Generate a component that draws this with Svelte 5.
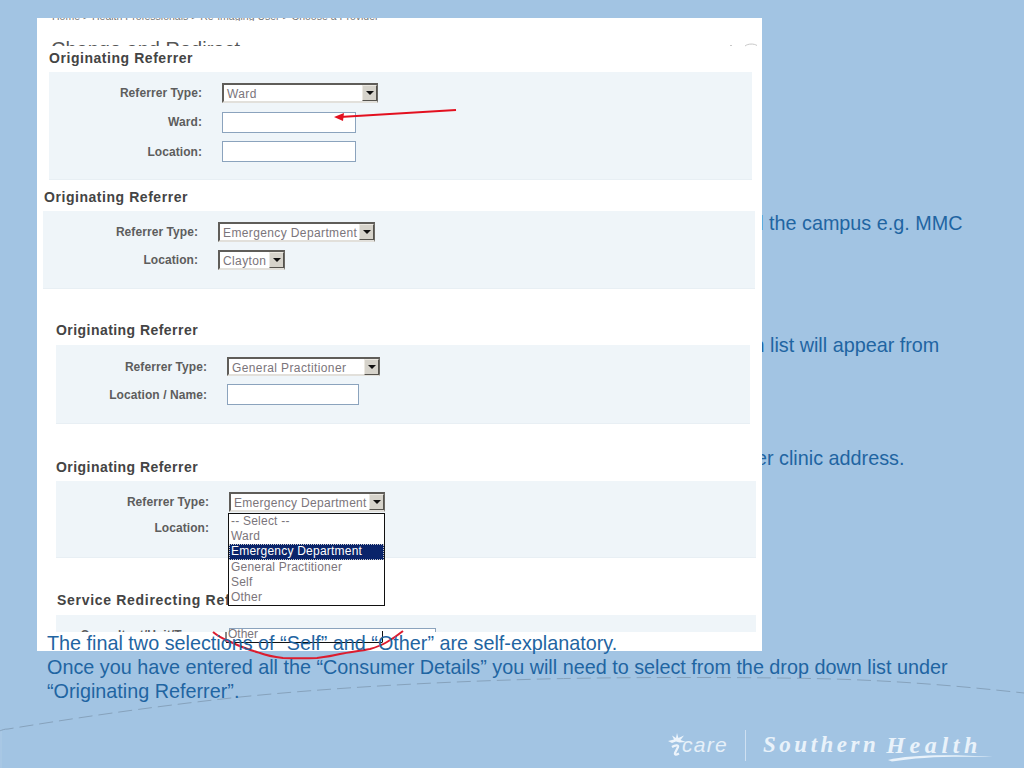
<script>
  const options = ['-- Select --', 'Ward', 'Emergency Department', 'General Practitioner', 'Self', 'Other'];
</script>

<div class="slide">
  <p class="frag f1">d the campus e.g. MMC</p>
  <p class="frag f2">n list will appear from</p>
  <p class="frag f3">her clinic address.</p>

  <svg class="swoosh" width="1024" height="768" viewBox="0 0 1024 768" aria-hidden="true">
    <path d="M0 731 C 2 730 4 729 8 729 C 70 719 140 708 240 697 C 330 688 430 682 543 679 C 620 677 760 677 833 679 C 900 681 960 686 1024 693" />
    <path class="edge" d="M1 731 V 768" />
  </svg>

  <div class="panel">
    <div class="crumbs">Home &gt; Health Professionals &gt; Re-Imaging User &gt; Choose a Provider</div>
    <div class="heading">Change and Redirect</div>

    <section class="s1">
      <h3>Originating Referrer</h3>
      <div class="box">
        <span class="lab">Referrer Type:</span>
        <div class="sel w156"><span>Ward</span><i></i></div>
        <span class="lab">Ward:</span>
        <div class="inp"></div>
        <span class="lab">Location:</span>
        <div class="inp"></div>
      </div>
    </section>

    <section class="s2">
      <h3>Originating Referrer</h3>
      <div class="box">
        <span class="lab">Referrer Type:</span>
        <div class="sel w157"><span>Emergency Department</span><i></i></div>
        <span class="lab">Location:</span>
        <div class="sel w67"><span>Clayton</span><i></i></div>
      </div>
    </section>

    <section class="s3">
      <h3>Originating Referrer</h3>
      <div class="box">
        <span class="lab">Referrer Type:</span>
        <div class="sel w153"><span>General Practitioner</span><i></i></div>
        <span class="lab">Location / Name:</span>
        <div class="inp"></div>
      </div>
    </section>

    <section class="s4">
      <h3>Originating Referrer</h3>
      <div class="box">
        <span class="lab">Referrer Type:</span>
        <div class="sel w156"><span>Emergency Department</span><i></i></div>
        <span class="lab">Location:</span>
        <div class="blank"></div>
      </div>
      <ul class="menu">
        {#each options as o, i}
          <li class:on={i === 2}>{o}</li>
        {/each}
      </ul>
    </section>

    <section class="s5">
      <h3>Service Redirecting Referrer</h3>
      <div class="box">
        <span class="lab">Consultant/Unit/Team:</span>
        <div class="other"></div>
      </div>
      <div class="picked">Other</div>
    </section>
  </div>

  <svg class="marks" width="1024" height="768" viewBox="0 0 1024 768" aria-hidden="true">
    <path class="faint" d="M730 45.5 H732 M745 46 C 748 43.5 754 43.5 757 45.5" />
    <path class="blk" d="M226 642.5 H382.5 M382.5 631 V642 M226 632 V642" />
    <path class="red" d="M213 632 C 220 638 226 640 233 643 C 243 648 250 650 260 653 C 268 656 275 657 283 658 C 295 658.5 306 658.5 317 658 C 325 657 332 656 340 654 C 350 652 360 651 370 649 C 377 647 382 645 387 642 C 394 638 398 635 403 631" />
    <path class="red thin" d="M456 110 L340 117" />
    <path class="head" d="M334 117 L344 113 L343 121 Z" />
  </svg>

  <div class="copy">
    <p>The final two selections of “Self” and “Other” are self-explanatory.</p>
    <p>Once you have entered all the “Consumer Details” you will need to select from the drop down list under</p>
    <p>“Originating Referrer”.</p>
  </div>

  <div class="brand">
    <svg class="star" width="24" height="26" viewBox="0 0 24 26" aria-hidden="true">
      <path d="M13 1 L14.4 6 L20 3.5 L16.5 8 L22 10 L15.5 10.5 L12 9.5 L8 11 L4 9 L10 7.5 L8 3.5 L12 6 Z" />
      <path d="M8 15 C 11 13 15 12.5 14 15 L11 21 C 10.4 23 12 23 15 21.5" class="stem" />
    </svg>
    <span class="care">care</span>
    <span class="div"></span>
    <span class="sh">Southern</span>
    <span class="sh big">Health</span>
    <svg class="under" width="106" height="8" viewBox="0 0 106 8" aria-hidden="true">
      <path d="M0 6 C 20 1 60 0 105 3 C 60 2 30 3 4 7.5 Z" />
    </svg>
  </div>
</div>

<style>
  :global(body) { margin: 0; }
  .slide {
    position: relative; width: 1024px; height: 768px; overflow: hidden;
    background: #a2c4e3; font-family: "Liberation Sans", Arial, sans-serif;
  }
  .frag, .copy p { margin: 0; font-size: 19.8px; line-height: 24px; color: #1f65a2; }
  .frag { position: absolute; white-space: nowrap; }
  .f1 { left: 752.5px; top: 211px; }
  .f2 { left: 753.5px; top: 333px; }
  .f3 { left: 745px; top: 446px; }

  .swoosh, .marks { position: absolute; left: 0; top: 0; pointer-events: none; }
  .swoosh path { fill: none; stroke: #86a2bc; stroke-width: 1; stroke-dasharray: 14 6; }
  .swoosh .edge { stroke: #aecbe6; stroke-dasharray: none; }

  .panel {
    position: absolute; left: 37px; top: 18px; width: 725px; height: 633px;
    background: #fff; overflow: hidden; color: #4c4c4c;
  }
  .crumbs {
    height: 9px; margin: -6px 0 0 15px; font-size: 10.5px; line-height: 9px;
    color: #777; overflow: hidden; white-space: nowrap;
  }
  .heading {
    height: 9px; margin: 16px 0 4px 14px; overflow: hidden;
    font-size: 20px; line-height: 24px; color: #555;
  }
  section { position: relative; }
  h3 { margin: 0; font-size: 14px; line-height: 16px; font-weight: 700; letter-spacing: .55px; color: #444; background: #fff; }
  .box {
    margin-top: 6px; background: #eff5f9; box-sizing: border-box;
    display: grid; align-items: center; column-gap: 20px; grid-auto-rows: min-content;
    border-bottom: 1px solid #e8eff4;
  }
  .lab { justify-self: end; font-size: 12px; font-weight: 700; letter-spacing: .07px; color: #5d5d5d; }
  .sel {
    box-sizing: border-box; height: 20px; display: flex; align-items: center; justify-content: space-between;
    background: #fff; border: 2px solid; border-color: #5f5d59 #6b6964 #e2e0db #5f5d59;
    border-right-width: 1px;
    padding-left: 3px; font-size: 12px; letter-spacing: .38px; color: #7b757b; white-space: nowrap;
    justify-self: start;
  }
  .sel span { position: relative; top: 1px; }
  .sel i {
    position: relative; flex: none; width: 15px; height: 16px;
    background: #d6d3cb; border: 1px solid; border-color: #ece9e2 #55534e #55534e #ece9e2; box-sizing: border-box;
  }
  .sel i::after {
    content: ""; position: absolute; left: 3px; top: 5px;
    border: 4px solid transparent; border-top: 4px solid #111; border-bottom: 0;
  }
  .w156 { width: 156px; } .w157 { width: 157px; } .w153 { width: 153px; } .w67 { width: 67px; }
  .inp {
    box-sizing: border-box; width: 134px; height: 21px; background: #fff; border: 1px solid #8ba3bd;
    justify-self: start;
  }
  .blank { height: 20px; }

  .s1 { margin: 0 10px 0 12px; }
  .s1 .box { height: 108px; padding-top: 11px; grid-template-columns: 153px auto; row-gap: 8.5px; }
  .s2 { margin: 9px 7px 0 6px; }
  .s2 h3 { margin-left: 1px; }
  .s2 .box { height: 78px; padding-top: 11px; grid-template-columns: 155px auto; row-gap: 8px; }
  .s3 { margin: 33px 12px 0 19px; }
  .s3 h3 { letter-spacing: .45px; }
  .s3 .box { margin-top: 7px; height: 79px; padding-top: 12px; grid-template-columns: 151px auto; row-gap: 8px; }
  .s3 .inp { width: 132px; height: 21px; }
  .s3 .sel { height: 19px; }
  .s4 { margin: 35px 6px 0 19px; z-index: 2; }
  .s4 h3 { letter-spacing: .45px; }
  .s4 .box { height: 77px; padding-top: 11px; grid-template-columns: 153px auto; row-gap: 6px; }
  .s4 .sel { letter-spacing: .3px; }
  .s5 { margin: 34px 6px 0 19px; }
  .s5 h3 { margin-left: 1px; letter-spacing: .7px; }
  .s5 .box { margin-top: 7px; height: 17px; padding-top: 13px; grid-template-columns: 153px auto; align-items: start; overflow: hidden; border-bottom: 0; }
  .other {
    box-sizing: border-box; width: 207px; height: 24px; background: #fff; border: 1px solid #8ba3bd;
  }
  .picked {
    width: 40px; margin: -4px 0 0 172px; font-size: 12px; line-height: 13px; color: #7b757b;
  }
  .menu {
    position: absolute; left: 172px; top: 54px; width: 157px; box-sizing: border-box;
    margin: 0; padding: 0; list-style: none; background: #fff; border: 1px solid #111;
    font-size: 12px; line-height: 15.2px; letter-spacing: .22px; color: #7b757b;
  }
  .menu li { padding-left: 2px; height: 15.2px; white-space: nowrap; }
  .menu li.on { background: #0a246a; color: #fff; outline: 1px dotted #c9c9c9; outline-offset: -1px; }

  .faint { fill: none; stroke: #c8c8c8; stroke-width: 1; }
  .blk { fill: none; stroke: #111; stroke-width: 1; }
  .red { fill: none; stroke: #dc1c2e; stroke-width: 2; }
  .red.thin { stroke: #e3101f; }
  .head { fill: #e3101f; }

  .copy { position: absolute; left: 47px; top: 631px; white-space: nowrap; }

  .brand { position: absolute; left: 664px; top: 728px; display: flex; align-items: center; height: 34px; color: #e6f0f9; }
  .star { flex: none; margin-right: -6px; }
  .star path { fill: #edf4fb; }
  .star .stem { fill: none; stroke: #edf4fb; stroke-width: 2.2; }
  .care { font-size: 21px; font-style: italic; letter-spacing: 1.3px; margin-right: 17px; }
  .div { width: 1px; height: 31px; background: #cfe0f1; margin-right: 17px; }
  .sh { font-family: "Liberation Serif", serif; font-style: italic; font-size: 23px; font-weight: 700; letter-spacing: 3.5px; color: #e9f2fa; white-space: nowrap; margin-right: 7px; }
  .big { font-size: 24px; letter-spacing: 4.6px; margin: 0; }
  .under { position: absolute; left: 224px; top: 26px; }
  .under path { fill: #e9f2fa; }
</style>
